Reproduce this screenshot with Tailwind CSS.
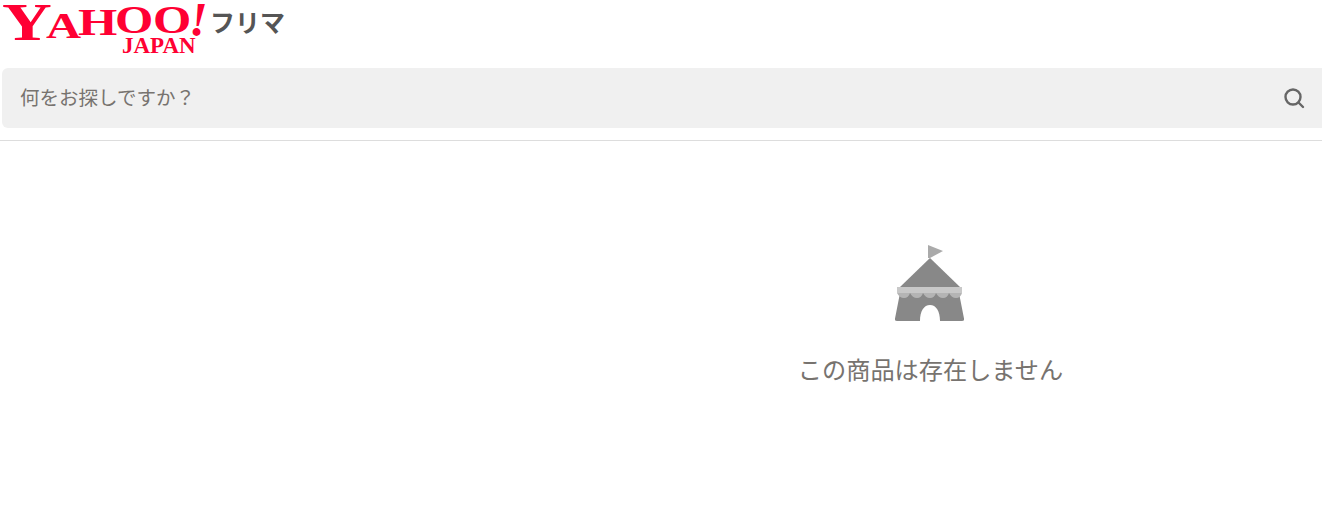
<!DOCTYPE html>
<html lang="ja">
<head>
    <meta charset="UTF-8">
    <title>Yahoo!フリマ</title>
    <script src="https://cdn.jsdelivr.net/npm/@tailwindcss/browser@4"></script>
</head>
<body class="bg-white overflow-hidden font-['Open_Sans','Noto_Sans_CJK_JP',sans-serif]">
<header class="h-[141px] border-b border-[#dddddd] pl-[2px]">
    <div class="flex items-start h-[68px]">
        <a href="#" class="relative block w-[204px] h-[56px] font-['Liberation_Serif',serif] font-bold text-[#ff0033] no-underline">
            <span class="absolute left-0 top-[1px] text-[53px] leading-[0.8] scale-x-[1.3] origin-left">Y</span>
            <span class="absolute left-[44px] top-[12px] text-[36px] leading-[0.8] scale-x-[1.35] origin-left">A</span>
            <span class="absolute left-[76px] top-[7px] text-[38px] leading-[0.8] scale-x-[1.33] origin-left">H</span>
            <span class="absolute left-[113px] top-[3px] text-[41px] leading-[0.8] scale-x-[1.2] origin-left">O</span>
            <span class="absolute left-[151px] top-[3px] text-[41px] leading-[0.8] scale-x-[1.2] origin-left">O</span>
            <span class="absolute left-[187px] top-[1px] text-[48px] leading-[0.8] italic">!</span>
            <span class="absolute left-[120px] top-[37px] text-[23px] leading-[0.8]">JAPAN</span>
        </a>
        <span class="ml-[4px] mt-[4px] text-[25px] leading-[36px] font-bold text-[#555555]">フリマ</span>
    </div>
    <form class="flex items-center justify-between h-[60px] bg-[#f0f0f0] rounded-l-[6px] pl-[18px] pr-[16px]">
        <span class="text-[19.5px] text-[#77736f]">何をお探しですか？</span>
        <svg class="w-[24px] h-[24px]" viewBox="0 0 24 24" fill="none" stroke="#666666" stroke-width="2.4" stroke-linecap="round">
            <circle cx="11" cy="11" r="7.500"/>
            <path d="M16.500 16.500 21 21"/>
        </svg>
    </form>
</header>
<main class="ml-[539px] flex flex-col items-center pt-[102px]">
    <svg class="w-[72px] h-[80px] mr-[4px]" viewBox="0 0 72 80" fill="none">
        <path d="M35 2 50 8 37 15H35Z" fill="#aaaaaa"/>
        <path d="M37 15 67 44H7Z" fill="#888888"/>
        <path d="M7 50H66L71 75.500Q71.500 78 69 78H47C47 68 43 62 37 62 31 62 27 68 27 78H4Q1.500 78 2 75.500Z" fill="#888888"/>
        <rect x="4" y="44" width="65" height="6" fill="#c8c8c8"/>
        <path d="M4 50H69Q67.500 55 63 55T56 50Q54.500 55 50 55T43 50Q41.500 55 37 55T30 50Q28.500 55 24 55T17 50Q15.500 55 11 55T4 50Z" fill="#b4b4b4"/>
    </svg>
    <p class="mt-[29px] text-[24.2px] leading-[36px] text-[#77736f]">この商品は存在しません</p>
</main>
</body>
</html>
